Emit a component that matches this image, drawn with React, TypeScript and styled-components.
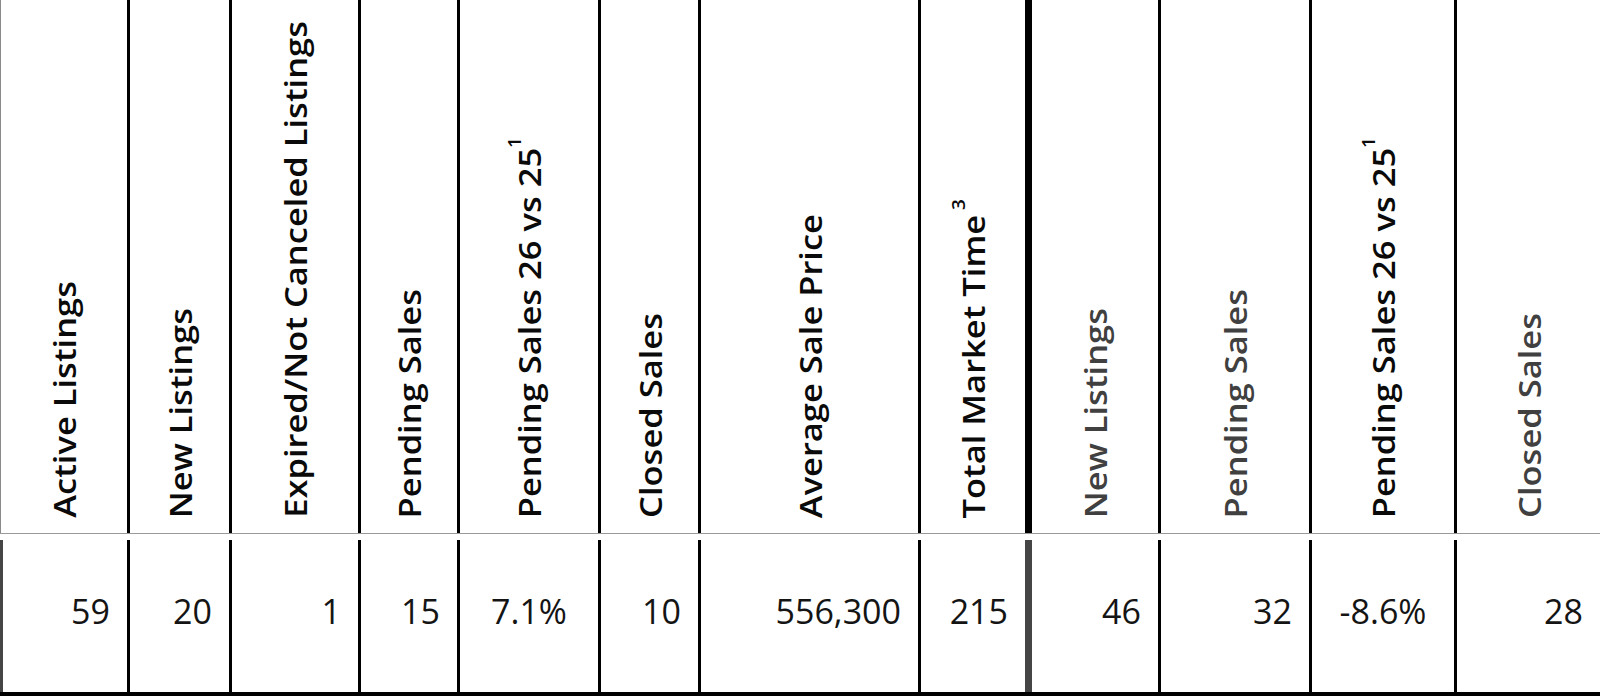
import styled, { createGlobalStyle } from "styled-components";

const GlobalStyle = createGlobalStyle`
	html, body {
		margin: 0;
		padding: 0;
		background: #ffffff;
	}
	body {
		font-family: "Open Sans", "Liberation Sans", sans-serif;
		color: #111111;
	}
`;

type Column = {
	label: string;
	sup?: string;
	supGap?: boolean;
	value: string;
	width: number;
	muted?: boolean;
	centered?: boolean;
	divider?: "thick" | "none";
};

const columns: Column[] = [
	{ label: "Active Listings", value: "59", width: 130 },
	{ label: "New Listings", value: "20", width: 102 },
	{ label: "Expired/Not Canceled Listings", value: "1", width: 129 },
	{ label: "Pending Sales", value: "15", width: 99 },
	{ label: "Pending Sales 26 vs 25", sup: "1", value: "7.1%", width: 141, centered: true },
	{ label: "Closed Sales", value: "10", width: 100 },
	{ label: "Average Sale Price", value: "556,300", width: 220 },
	{ label: "Total Market Time", sup: "3", supGap: true, value: "215", width: 111, divider: "thick" },
	{ label: "New Listings", value: "46", width: 129, muted: true },
	{ label: "Pending Sales", value: "32", width: 151, muted: true },
	{ label: "Pending Sales 26 vs 25", sup: "1", value: "-8.6%", width: 145, centered: true },
	{ label: "Closed Sales", value: "28", width: 143, muted: true, divider: "none" },
];

const template = columns.map((c) => `${c.width}px`).join(" ");

const Table = styled.div`
	width: 1600px;
	height: 696px;
	display: flex;
	flex-direction: column;
`;

const HeaderRow = styled.div`
	display: grid;
	grid-template-columns: ${template};
	height: 534px;
	border-bottom: 1px solid #9a9a9a;
	box-sizing: border-box;
`;

const DataRow = styled.div`
	display: grid;
	grid-template-columns: ${template};
	margin-top: 6px;
	height: 156px;
	border-bottom: 4px solid #000000;
	box-sizing: border-box;
`;

const HeadCell = styled.div<{ $divider?: string; $first?: boolean }>`
	box-sizing: border-box;
	display: flex;
	align-items: flex-end;
	justify-content: center;
	padding-bottom: 15px;
	border-left: ${(p) => (p.$first ? "1px solid #8a8a8a" : "none")};
	border-right: ${(p) =>
		p.$divider === "none"
			? "none"
			: p.$divider === "thick"
			? "7px solid #000000"
			: "3px solid #000000"};
`;

const HeadLabel = styled.span<{ $muted?: boolean }>`
	writing-mode: vertical-rl;
	transform: rotate(180deg) scaleX(0.9);
	font-family: "Open Sans", "Liberation Sans", sans-serif;
	font-weight: 600;
	font-size: 34.5px;
	line-height: 1.2;
	white-space: nowrap;
	color: ${(p) => (p.$muted ? "#404040" : "#0a0a0a")};

	sup {
		font-size: 19px;
		line-height: 0;
		vertical-align: 16px;
	}
`;

const ValueCell = styled.div<{ $divider?: string; $first?: boolean; $centered?: boolean }>`
	box-sizing: border-box;
	display: flex;
	align-items: center;
	justify-content: ${(p) => (p.$centered ? "center" : "flex-end")};
	padding: 0 ${(p) => (p.$centered ? "0" : "17px")} 10px 0;
	font-family: "Open Sans", "Liberation Sans", sans-serif;
	font-size: 34px;
	font-weight: 400;
	color: #141414;
	border-left: ${(p) => (p.$first ? "3px solid #454545" : "none")};
	border-right: ${(p) =>
		p.$divider === "none"
			? "none"
			: p.$divider === "thick"
			? "7px solid #454545"
			: "3px solid #000000"};
`;

export default function App() {
	return (
		<>
			<GlobalStyle />
			<Table>
				<HeaderRow>
					{columns.map((c, i) => (
						<HeadCell key={i} $divider={c.divider} $first={i === 0}>
							<HeadLabel $muted={c.muted}>
								{c.label}
								{c.sup && (
									<sup>
										{c.supGap ? " " : ""}
										{c.sup}
									</sup>
								)}
							</HeadLabel>
						</HeadCell>
					))}
				</HeaderRow>
				<DataRow>
					{columns.map((c, i) => (
						<ValueCell
							key={i}
							$divider={c.divider}
							$first={i === 0}
							$centered={c.centered}
						>
							{c.value}
						</ValueCell>
					))}
				</DataRow>
			</Table>
		</>
	);
}
